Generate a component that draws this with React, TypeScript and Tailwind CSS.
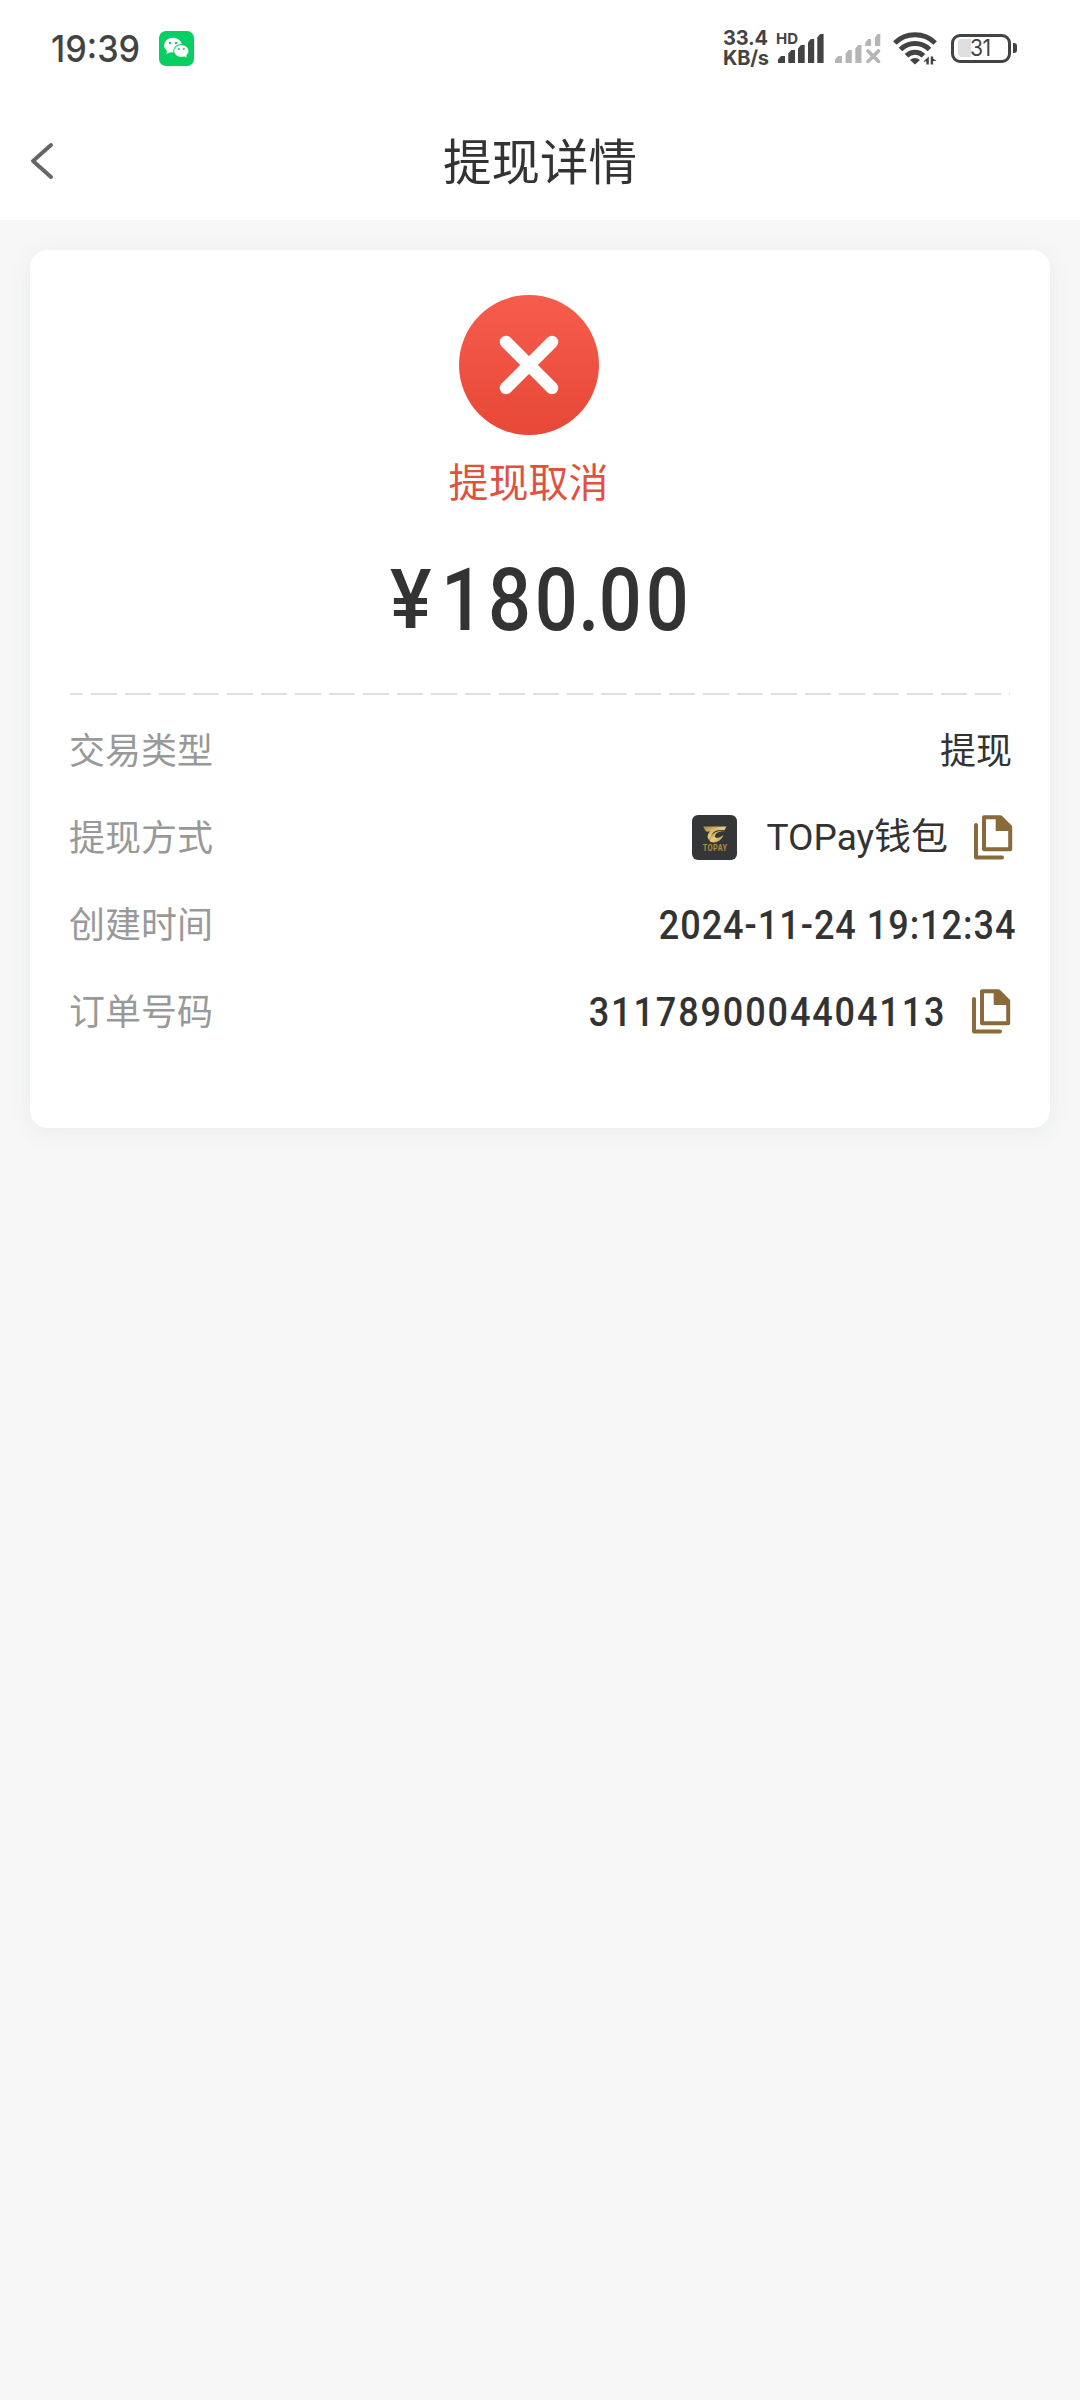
import type { ReactNode } from 'react'

const ORDER = {
  status: '提现取消',
  amount: ['180', '00'],
  type: '提现',
  method: 'TOPay钱包',
  createdAt: '2024-11-24 19:12:34',
  orderNo: '3117890004404113',
}

function WechatIcon() {
  return (
    <svg className="h-[35px] w-[35px]" viewBox="0 0 35 35">
      <rect width="35" height="35" rx="7" fill="#06cf63" />
      <g fill="#fff">
        <ellipse cx="14" cy="14.2" rx="9" ry="7.4" />
        <path d="M8 19l-.4 4 4-2z" />
      </g>
      <ellipse cx="22.3" cy="20" rx="8.1" ry="7" fill="#06cf63" />
      <ellipse cx="22.3" cy="20" rx="7.2" ry="6.1" fill="#fff" />
      <path d="M25 25l2.600 1.800-.4-3.400z" fill="#fff" />
      <g fill="#06cf63">
        <circle cx="11" cy="12" r="1.2" />
        <circle cx="17" cy="12" r="1.2" />
        <circle cx="20" cy="18" r="1" />
        <circle cx="24.8" cy="18" r="1" />
      </g>
    </svg>
  )
}

function SignalIcon() {
  return (
    <svg className="h-[30px] w-[46px]" viewBox="0 0 46 30" fill="#434343">
      <path d="M0 30v-3.500l3-3.500h4v7z" />
      <path d="M10.300 30v-9.500l3-3.500h3.700v13z" />
      <path d="M20 30v-14.500l3-3.500h3.700v18z" />
      <path d="M30 30v-20.500l2.800-3.500h3.400v24z" />
      <path d="M39.300 30v-25.500l2.800-3.500h3.500v29z" />
    </svg>
  )
}

function NoSignalIcon() {
  return (
    <svg className="h-[30px] w-[46px]" viewBox="0 0 46 30" fill="#b5b5b5">
      <path d="M0 30v-3.500l3-3.500h4v7z" />
      <path d="M10.600 30v-9.500l3-3.500h3.200v13z" />
      <path d="M20.300 30v-14.500l3-3.500h3.200v18z" />
      <path d="M30.300 13v-3.500l2.800-3.500h3v7z" />
      <path d="M40 13v-8.500l2.600-3.500h2.700v12z" />
      <path d="M33 18l10.500 10.500M43.500 18l-10.500 10.500" stroke="#b5b5b5" strokeWidth="3.600" strokeLinecap="round" />
    </svg>
  )
}

function WifiIcon() {
  return (
    <svg className="h-[33px] w-[44px]" viewBox="0 0 44 33" fill="none">
      <g stroke="#434343" strokeWidth="5">
        <path d="M1.800 11a29 29 0 0 1 40.400 0" />
        <path d="M7.500 17.600a20.500 20.500 0 0 1 29 0" />
        <path d="M13.500 23.800a12 12 0 0 1 17 0" />
      </g>
      <path d="M22 32.500l-5-4.600a7.500 7.500 0 0 1 10 0z" fill="#434343" />
      <g fill="#434343">
        <path d="M35.800 24.500v8h-2.400v-3h-3z" />
        <path d="M37.700 32.500v-8h2.400v2l3.500 2.500h-3.500v3.500z" />
      </g>
    </svg>
  )
}

function Battery() {
  return (
    <div className="flex items-center gap-0.5">
      <div className="flex h-[29px] w-[60px] items-center rounded-[9px] border-[3px] border-[#434343] pl-1">
        <div className="h-[18px] w-[13px] rounded-l-[4px] bg-[#dedede]" />
        <span className="-ml-px origin-left scale-x-[0.92] font-['Inter'] text-[23px] leading-none tracking-[-0.5px]">31</span>
      </div>
      <div className="h-[10px] w-[4px] rounded-r-[3px] bg-[#434343]" />
    </div>
  )
}

function StatusBar() {
  return (
    <div className="flex h-24 items-center justify-between pr-[63px] pl-[51px] text-[#434343]">
      <div className="flex items-center">
        <span className="w-[108px] origin-left scale-x-[0.925] font-['Inter'] text-[37px] leading-none font-medium">19:39</span>
        <WechatIcon />
      </div>
      <div className="flex items-center">
        <div className="w-[47px] font-['Inter'] text-[20px] leading-[20px] font-bold tracking-[-0.2px]">
          <div>33.4</div>
          <div>KB/s</div>
        </div>
        <div className="relative ml-2 h-[30px]">
          <SignalIcon />
          <span className="absolute -top-0.5 -left-0.5 font-['Inter'] text-[15px] leading-none font-bold">HD</span>
        </div>
        <div className="ml-[11px]">
          <NoSignalIcon />
        </div>
        <div className="ml-3">
          <WifiIcon />
        </div>
        <div className="ml-3.5">
          <Battery />
        </div>
      </div>
    </div>
  )
}

function TopayLogo() {
  return (
    <div className="flex h-[45px] w-[45px] flex-col items-center rounded-[6px] bg-[#343638] pt-[11px]">
      <svg className="h-[17px] w-[24px] shrink-0" viewBox="0 0 24 17">
        <defs>
          <linearGradient id="gold" x1="0" y1="0" x2="1" y2="1">
            <stop offset="0" stopColor="#a8853e" />
            <stop offset=".5" stopColor="#e8cc80" />
            <stop offset="1" stopColor="#a07c36" />
          </linearGradient>
        </defs>
        <path d="M0 .5h23.500l-2 3.800c-6-1.200-10.500.2-12.500 3.700l-2.500 6c-3-2-2-6 .5-8.500h-4z" fill="url(#gold)" />
        <path d="M22.500 5.500c-5.500-1-10 1.500-10.500 4.500-.3 3 4 2.500 8.500-1-1.500 4.500-5.500 7.500-10 7.500-4.500 0-5-3.500-2.500-6.500 3-4 8.500-6.500 14.500-4.500z" fill="url(#gold)" />
      </svg>
      <span className="mt-px scale-x-[0.82] font-['Roboto'] text-[9px] leading-none font-bold tracking-[0.500px] text-[#b08c46]">TOPAY</span>
    </div>
  )
}

function CopyIcon() {
  return (
    <svg className="h-[45px] w-[39px]" viewBox="0 0 39 45" fill="none">
      <path d="M2 10v32.500h26" stroke="#8a6a3b" strokeWidth="4" strokeLinecap="round" strokeLinejoin="round" />
      <path d="M10 2.200h16.500l9.700 9.600v22.400h-26.200z" stroke="#8a6a3b" strokeWidth="4" strokeLinejoin="round" />
      <path d="M21.700 1.500h5l10 10v4.500h-15z" fill="#8a6a3b" />
    </svg>
  )
}

function Row({ label, children }: { label: string; children: ReactNode }) {
  return (
    <div className="flex h-[87px] items-center justify-between">
      <span className="text-[36px] leading-none text-[#999]">{label}</span>
      <div className="flex items-center text-[36px] leading-none">{children}</div>
    </div>
  )
}

export default function App() {
  return (
    <main className="h-[2400px] w-[1080px] overflow-hidden bg-[#f7f7f7] font-['Roboto','Noto_Sans_CJK_SC',sans-serif] text-[#333]">
      <header className="h-[220px] bg-white">
        <StatusBar />
        <div className="grid h-[130px] grid-cols-[1fr_auto_1fr] items-center">
          <svg className="ml-[30px] h-[38px] w-[24px]" viewBox="0 0 24 38" fill="none">
            <path d="M21 3L3 19l18 16" stroke="#666" strokeWidth="4" strokeLinecap="round" strokeLinejoin="round" />
          </svg>
          <h1 className="pt-1.5 text-[48.5px] leading-none">提现详情</h1>
        </div>
      </header>

      <section className="mx-[30px] mt-[30px] h-[878px] rounded-[18px] bg-white px-[39px] pt-[45px] shadow-[0_4px_24px_rgba(60,80,100,0.07)]">
        {/* Result */}
        <div className="mr-[23px] flex flex-col items-center">
          <svg className="h-[140px] w-[140px]" viewBox="0 0 140 140">
            <defs>
              <linearGradient id="fail" x1="0" y1="0" x2="0" y2="1">
                <stop offset="0" stopColor="#f65c4d" />
                <stop offset="1" stopColor="#e74837" />
              </linearGradient>
            </defs>
            <circle cx="70" cy="70" r="70" fill="url(#fail)" />
            <path d="M47 47l46 46M93 47l-46 46" stroke="#fff" strokeWidth="12.500" strokeLinecap="round" />
          </svg>
          <p className="mt-[29px] text-[40px] leading-none text-[#e2513f]">{ORDER.status}</p>
        </div>

        {/* Amount */}
        <div className="mt-[54px] flex h-[84px] items-center justify-center">
          <div className="flex w-[300px] items-center">
            <span className="w-[51px] shrink-0 origin-left scale-x-[0.93] text-[84px] leading-none font-medium">¥</span>
            <span className="origin-left scale-x-[0.86] text-[88px] leading-none font-medium tracking-[4.5px] whitespace-nowrap">
              {ORDER.amount[0]}
              <span className="-mr-[5px] -ml-[4px]">.</span>
              {ORDER.amount[1]}
            </span>
          </div>
        </div>

        {/* Divider */}
        <div className="mt-[51px] ml-px h-0.5 w-[940px] bg-[repeating-linear-gradient(90deg,#e0e0e0_0_13px,transparent_13px_21px,#e0e0e0_21px_34px)]" />

        {/* Details */}
        <div className="mt-[13px]">
          <Row label="交易类型">
            <span className="mr-[-1px]">{ORDER.type}</span>
          </Row>
          <Row label="提现方式">
            <div className="-mr-0.5 flex items-center pb-0.5">
              <TopayLogo />
              <span className="mr-[26px] ml-[29px] text-[37px]">{ORDER.method}</span>
              <CopyIcon />
            </div>
          </Row>
          <Row label="创建时间">
            <span className="mr-[-5px] origin-right scale-x-90 text-[40px] font-medium tracking-[1.1px]">{ORDER.createdAt}</span>
          </Row>
          <Row label="订单号码">
            <div className="flex items-center pb-0.5">
              <span className="mr-[26px] origin-right scale-x-90 pt-0.5 text-[40px] font-medium tracking-[2.1px]">{ORDER.orderNo}</span>
              <CopyIcon />
            </div>
          </Row>
        </div>
      </section>
    </main>
  )
}
